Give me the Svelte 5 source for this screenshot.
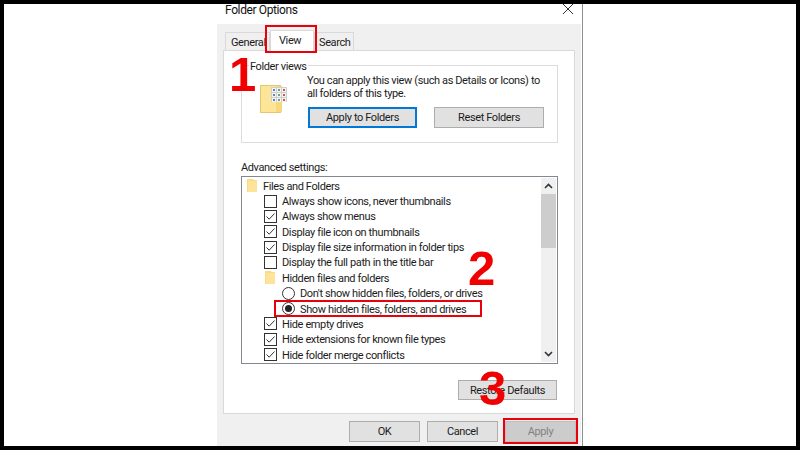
<script lang="ts">
	// Folder Options dialog, "View" tab, with red tutorial annotations on top.
	type Row = { kind: 'folder' | 'check' | 'radio'; label: string; on?: boolean; indent: number };

	const rows: Row[] = [
		{ kind: 'folder', label: 'Files and Folders', indent: 0 },
		{ kind: 'check', label: 'Always show icons, never thumbnails', on: false, indent: 1 },
		{ kind: 'check', label: 'Always show menus', on: true, indent: 1 },
		{ kind: 'check', label: 'Display file icon on thumbnails', on: true, indent: 1 },
		{ kind: 'check', label: 'Display file size information in folder tips', on: true, indent: 1 },
		{ kind: 'check', label: 'Display the full path in the title bar', on: false, indent: 1 },
		{ kind: 'folder', label: 'Hidden files and folders', indent: 1 },
		{ kind: 'radio', label: "Don't show hidden files, folders, or drives", on: false, indent: 2 },
		{ kind: 'radio', label: 'Show hidden files, folders, and drives', on: true, indent: 2 },
		{ kind: 'check', label: 'Hide empty drives', on: true, indent: 1 },
		{ kind: 'check', label: 'Hide extensions for known file types', on: true, indent: 1 },
		{ kind: 'check', label: 'Hide folder merge conflicts', on: true, indent: 1 }
	];
</script>

<div class="page">
	<div class="dialog">
		<header class="title">
			<span>Folder Options</span>
			<svg class="close" width="10" height="10" viewBox="0 0 10 10" aria-hidden="true">
				<path d="M0 0 L10 10 M10 0 L0 10" stroke="#333" stroke-width="1" fill="none" />
			</svg>
		</header>

		<div class="body">
			<div class="tabs">
				<div class="tab general">General</div>
				<div class="tab view">View</div>
				<div class="tab search">Search</div>
			</div>

			<div class="sheet">
				<div class="views">
					<span class="legend">Folder views</span>
					<svg class="views-icon" width="27" height="28" viewBox="0 0 27 28" aria-hidden="true">
						<rect x="0.5" y="0.5" width="20" height="27" fill="#fde597" stroke="#e8c76c" />
						<rect x="16" y="1" width="6" height="26" fill="#f8d87e" />
						<rect x="11" y="2" width="16" height="15" fill="#cfcfcf" />
						{#each [0, 1, 2] as r}
							{#each [0, 1, 2] as c}
								<rect x={12 + c * 5} y={3 + r * 5} width="4" height="4" fill="#f4f4f4" />
								<rect x={13 + c * 5} y={4 + r * 5} width="2" height="2" fill={c === 2 ? '#c8584c' : c === 1 ? '#7aa07a' : '#5b86b5'} />
							{/each}
						{/each}
					</svg>
					<div class="views-main">
						<p>You can apply this view (such as Details or Icons) to<br />all folders of this type.</p>
						<div class="views-buttons">
							<button class="btn focused">Apply to Folders</button>
							<button class="btn reset">Reset Folders</button>
						</div>
					</div>
				</div>

				<div class="adv-label">Advanced settings:</div>
				<div class="tree">
					<div class="rows">
						{#each rows as row}
							<div class="row indent-{row.indent}">
								{#if row.kind === 'folder'}
									<svg width="13" height="13" viewBox="0 0 13 13" aria-hidden="true">
										<path d="M1 0 H7 L8 1 H11 V13 H1 Z" fill="#fbdc84" />
										<rect x="2" y="2" width="9" height="11" fill="#fde49a" />
									</svg>
								{:else if row.kind === 'check'}
									<svg width="13" height="13" viewBox="0 0 13 13" aria-hidden="true">
										<rect x="0.5" y="0.5" width="12" height="12" fill="#fff" stroke="#333" />
										{#if row.on}
											<path d="M2.5 6.5 L5.2 9.2 L10.5 3.5" fill="none" stroke="#333" stroke-width="1" />
										{/if}
									</svg>
								{:else}
									<svg width="13" height="13" viewBox="0 0 13 13" aria-hidden="true">
										<circle cx="6.5" cy="6.5" r="6" fill="#fff" stroke="#333" />
										{#if row.on}
											<circle cx="6.5" cy="6.5" r="3.5" fill="#222" />
										{/if}
									</svg>
								{/if}
								<span>{row.label}</span>
							</div>
						{/each}
					</div>
					<div class="scroll">
						<svg class="arrow up" width="9" height="6" viewBox="0 0 9 6" aria-hidden="true">
							<path d="M1 5 L4.5 1.5 L8 5" fill="none" stroke="#333" stroke-width="1.6" />
						</svg>
						<div class="thumb"></div>
						<div class="track"></div>
						<svg class="arrow down" width="9" height="6" viewBox="0 0 9 6" aria-hidden="true">
							<path d="M1 1 L4.5 4.5 L8 1" fill="none" stroke="#333" stroke-width="1.6" />
						</svg>
					</div>
				</div>
				<div class="restore-row">
					<button class="btn restore">Restore Defaults</button>
				</div>
			</div>

			<div class="footer">
				<button class="btn small">OK</button>
				<button class="btn small">Cancel</button>
				<button class="btn small disabled">Apply</button>
			</div>
		</div>
	</div>

	<!-- tutorial annotations sit over the dialog -->
	<div class="mark box-view"></div>
	<div class="mark box-show"></div>
	<div class="mark box-apply"></div>
	<div class="num n1">1</div>
	<div class="num n2">2</div>
	<div class="num n3">3</div>
</div>

<style>
	:global(body) {
		margin: 0;
		background: #fff;
	}
	.page {
		position: relative;
		width: 800px;
		height: 450px;
		box-sizing: border-box;
		border: 4px solid #000;
		overflow: hidden;
		background: #fff;
		display: flex;
		font-family: Roboto, "Open Sans", sans-serif;
		font-size: 11px;
		letter-spacing: -0.38px;
		color: #1c1c1c;
	}
	.dialog {
		width: 366px;
		margin-left: 213px;
		padding-right: 1px;
		border-right: 1px solid #8f8f8f;
		box-sizing: border-box;
		display: flex;
		flex-direction: column;
	}
	.title {
		height: 20px;
		flex-shrink: 0;
		display: flex;
		align-items: flex-start;
		justify-content: space-between;
		padding: 0 8px 0 8px;
		line-height: 12px;
		font-size: 12px;
		color: #111;
	}
	.close {
		flex-shrink: 0;
	}
	.body {
		flex: 1;
		background: #f0f0f0;
		padding: 8px 0 0 6px;
		display: flex;
		flex-direction: column;
		min-height: 0;
	}
	.tabs {
		display: flex;
		height: 18px;
		flex-shrink: 0;
		padding-left: 2px;
	}
	.tab {
		border: 1px solid #d9d9d9;
		border-bottom: 0;
		padding: 2px 0 0 5px;
		box-sizing: border-box;
		line-height: 15px;
	}
	.general { width: 45px; }
	.view {
		width: 44px;
		height: 21px;
		margin-top: -2px;
		background: #fff;
		padding: 2px 0 0 8px;
		position: relative;
		z-index: 1;
	}
	.search { width: 40px; padding-left: 4px; }
	.sheet {
		width: 352px;
		height: 364px;
		flex-shrink: 0;
		box-sizing: border-box;
		background: #fff;
		border: 1px solid #d9d9d9;
		padding: 14px 0 0 17px;
	}
	.views {
		width: 317px;
		height: 78px;
		box-sizing: border-box;
		border: 1px solid #dcdcdc;
		padding: 0 0 0 18px;
		display: flex;
		gap: 20px;
		position: relative;
	}
	.legend {
		position: absolute;
		top: -7px;
		left: 7px;
		padding: 0 1px;
		background: #fff;
		line-height: 15px;
	}
	.views-icon {
		margin-top: 19px;
		flex-shrink: 0;
	}
	.views-main {
		padding-top: 8px;
	}
	p {
		margin: 0;
		line-height: 13px;
		white-space: nowrap;
	}
	.views-buttons {
		display: flex;
		gap: 17px;
		margin-top: 7px;
		margin-left: 1px;
	}
	.btn {
		font: inherit;
		letter-spacing: inherit;
		color: #1c1c1c;
		height: 21px;
		padding: 0;
		box-sizing: border-box;
		background: #e1e1e1;
		border: 1px solid #adadad;
		flex-shrink: 0;
	}
	.focused {
		width: 109px;
		border: 2px solid #0078d7;
	}
	.reset {
		width: 110px;
	}
	.adv-label {
		margin-top: 18px;
		line-height: 14px;
	}
	.tree {
		margin-top: 1px;
		height: 188px;
		width: 317px;
		box-sizing: border-box;
		border: 1px solid #828790;
		display: flex;
		overflow: hidden;
	}
	.rows {
		flex: 1;
		padding: 1px 0 0 4px;
		min-width: 0;
	}
	.row {
		display: flex;
		align-items: center;
		gap: 5px;
		height: 15.36px;
		white-space: nowrap;
	}
	.row svg {
		flex-shrink: 0;
	}
	.row span {
		padding-top: 1px;
	}
	.indent-0 span { margin-left: -1px; }
	.indent-1 { padding-left: 18px; }
	.indent-2 { padding-left: 36px; }
	.scroll {
		width: 15px;
		margin: 1px 1px 1px 0;
		background: #f0f0f0;
		display: flex;
		flex-direction: column;
		align-items: center;
		flex-shrink: 0;
	}
	.arrow {
		flex-shrink: 0;
	}
	.up {
		margin: 5px 0;
	}
	.down {
		margin: 5px 0;
	}
	.thumb {
		width: 100%;
		height: 54px;
		background: #cdcdcd;
	}
	.track {
		flex: 1;
	}
	.restore-row {
		width: 316px;
		display: flex;
		justify-content: flex-end;
		margin-top: 16px;
	}
	.restore {
		width: 99px;
		height: 20px;
	}
	.footer {
		display: flex;
		justify-content: flex-end;
		gap: 7px;
		padding: 7px 5px 0 0;
	}
	.small {
		width: 71px;
	}
	.disabled {
		background: #ccc;
		border-color: #bfbfbf;
		color: #838383;
	}
	.mark {
		position: absolute;
		border: 2px solid #e8000b;
		box-sizing: border-box;
		z-index: 2;
	}
	.box-view { left: 261px; top: 21px; width: 52px; height: 28px; }
	.box-show { left: 270px; top: 296px; width: 208px; height: 17px; }
	.box-apply { left: 499px; top: 414px; width: 75px; height: 26px; }
	.num {
		position: absolute;
		font-family: "Liberation Sans", Arial, sans-serif;
		font-weight: 700;
		font-size: 49px;
		line-height: 50px;
		letter-spacing: 0;
		color: #f00000;
		z-index: 3;
	}
	.n1 { left: 225px; top: 45px; }
	.n2 { left: 464px; top: 239px; }
	.n3 { left: 475px; top: 359px; }
</style>
